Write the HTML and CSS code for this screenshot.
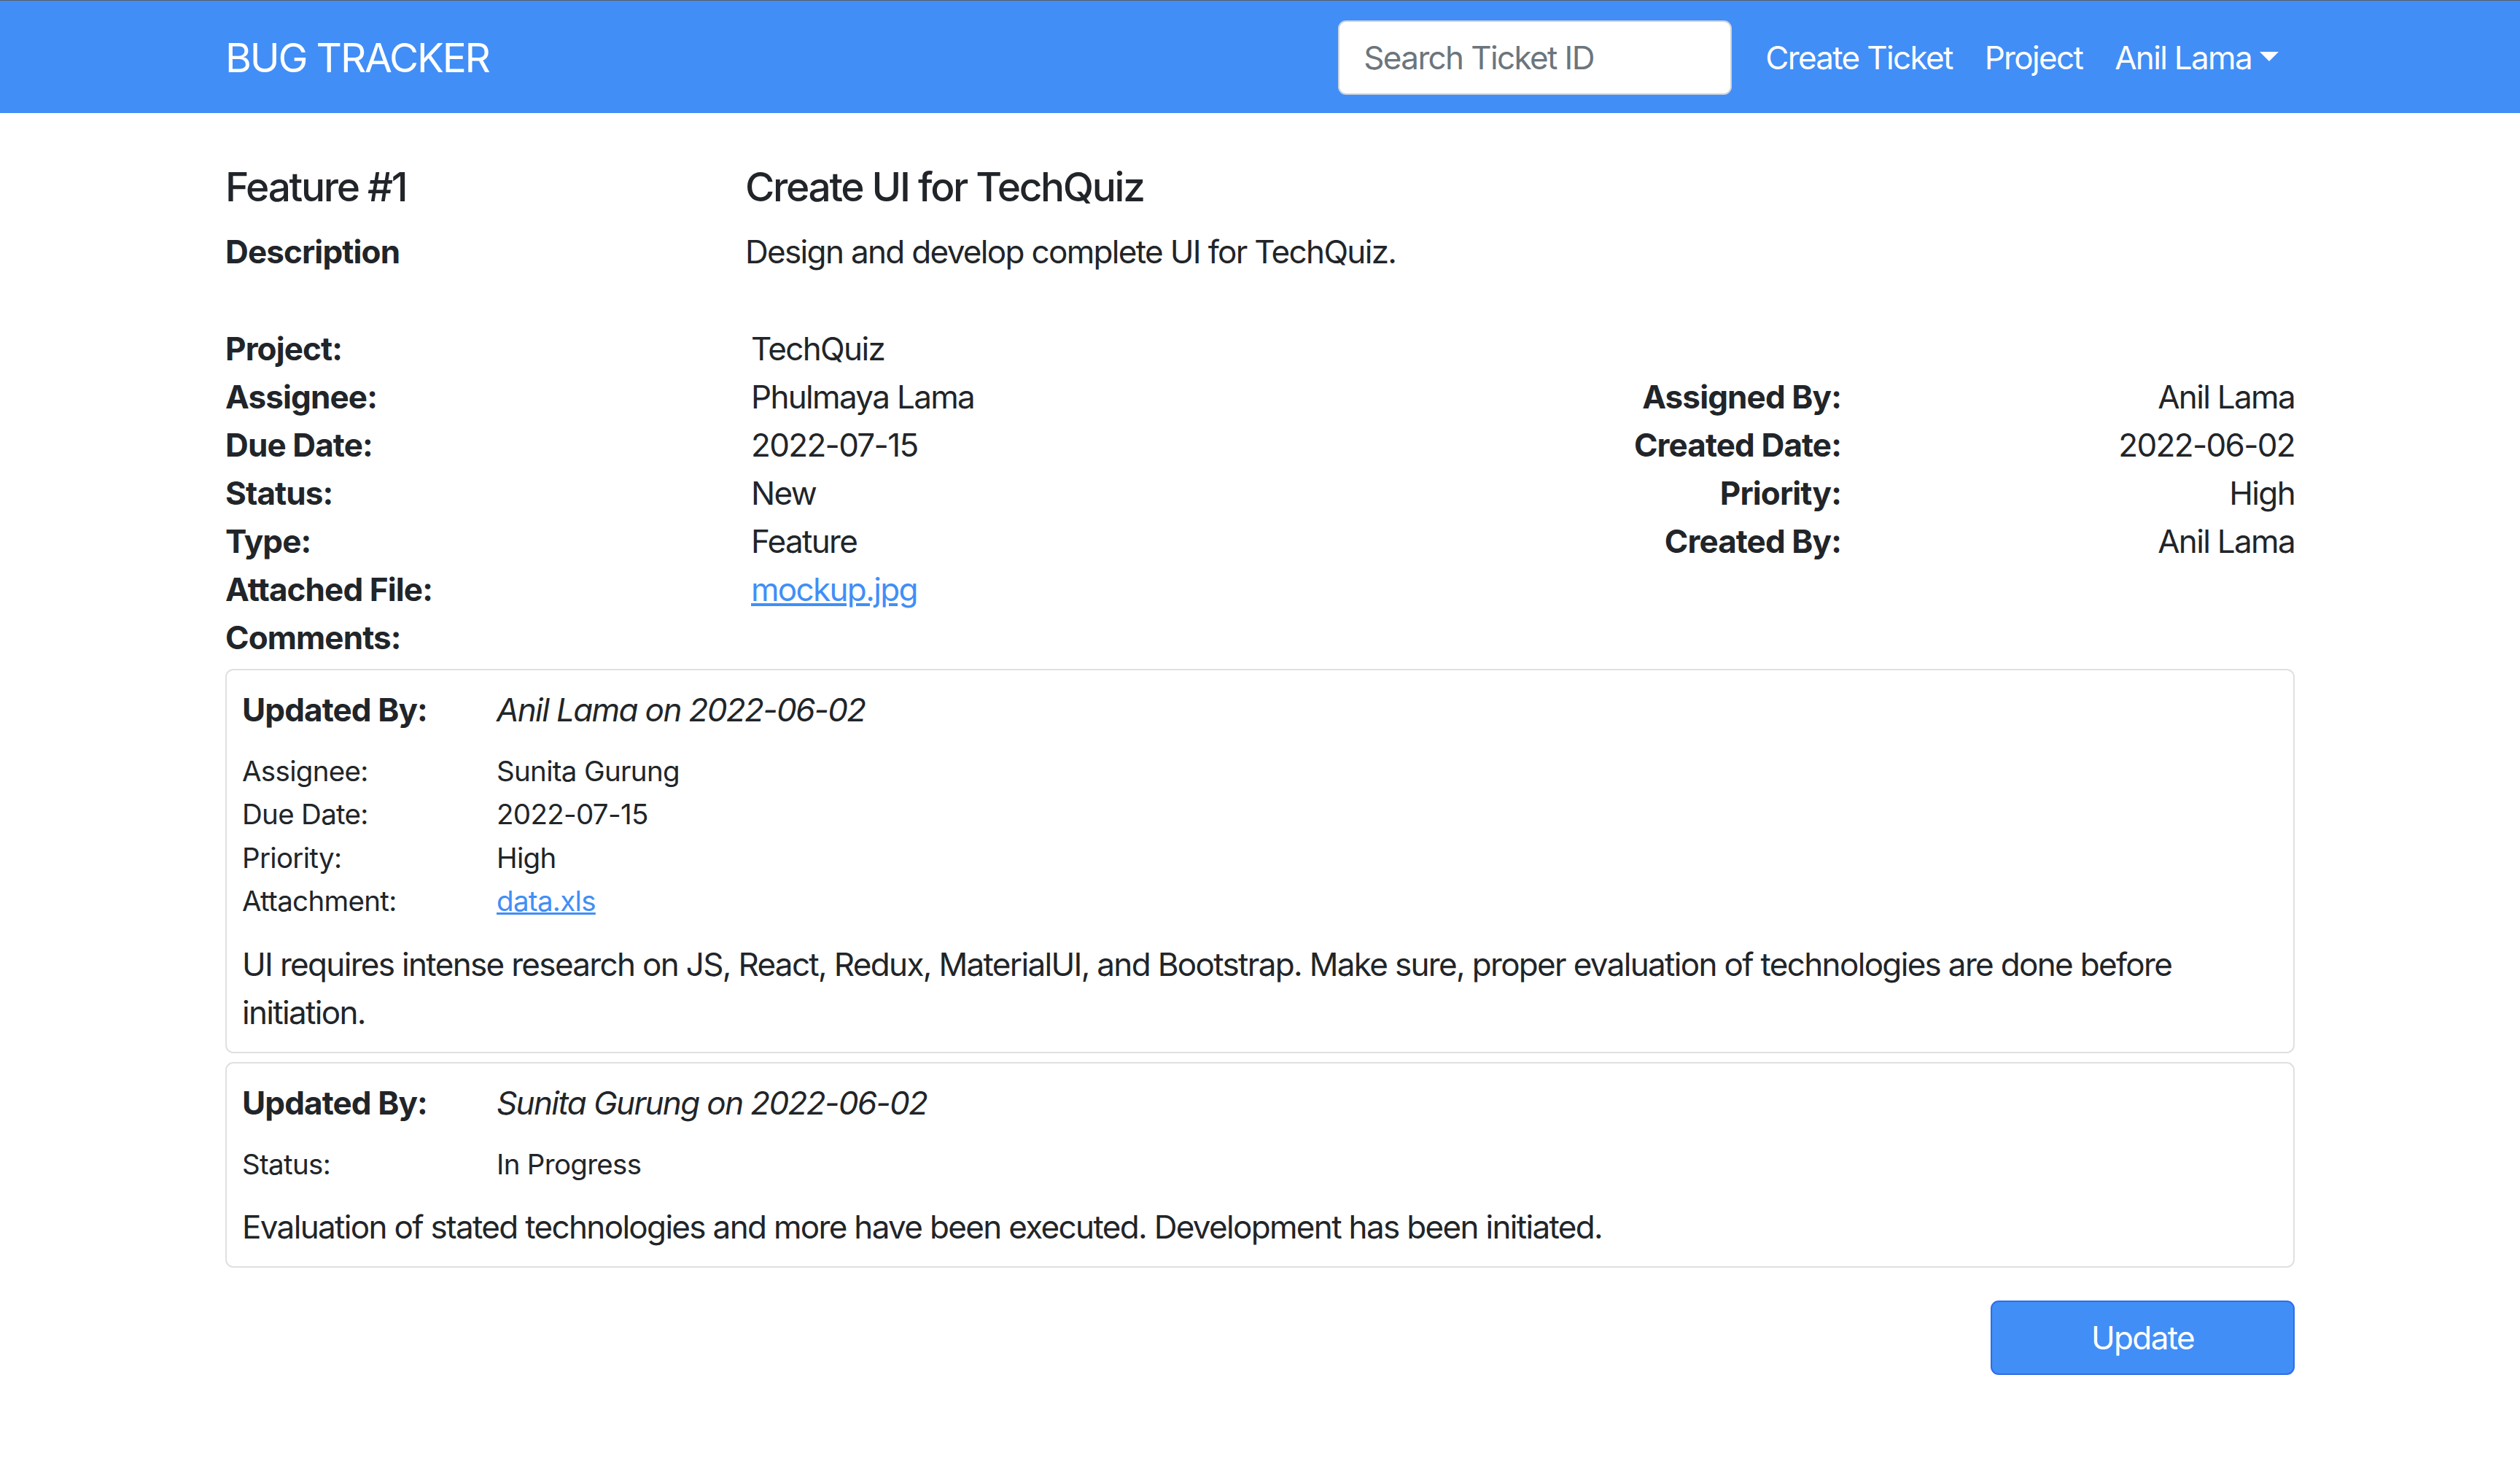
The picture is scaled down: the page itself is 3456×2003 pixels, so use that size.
FILE: index.html
```html
<!DOCTYPE html>
<html lang="en">
<head>
<meta charset="utf-8">
<title>Bug Tracker</title>
<link rel="stylesheet" href="styles.css">
</head>
<body>
<nav class="navbar">
  <div class="container nav-inner">
    <a class="brand" href="#">BUG TRACKER</a>
    <div class="nav-right">
      <input class="search" type="text" placeholder="Search Ticket ID">
      <a class="nav-link" href="#">Create Ticket</a>
      <a class="nav-link" href="#">Project</a>
      <a class="nav-link dropdown-toggle" href="#">Anil Lama</a>
    </div>
  </div>
</nav>

<main class="container page">
  <div class="title-row">
    <h5 class="title">Feature #1</h5>
    <h5 class="title">Create UI for TechQuiz</h5>
  </div>
  <div class="desc-row">
    <div class="label">Description</div>
    <div>Design and develop complete UI for TechQuiz.</div>
  </div>

  <div class="details">
    <div class="label">Project:</div><div>TechQuiz</div><div></div><div></div>
    <div class="label">Assignee:</div><div>Phulmaya Lama</div><div class="label right">Assigned By:</div><div class="right">Anil Lama</div>
    <div class="label">Due Date:</div><div>2022-07-15</div><div class="label right">Created Date:</div><div class="right">2022-06-02</div>
    <div class="label">Status:</div><div>New</div><div class="label right">Priority:</div><div class="right">High</div>
    <div class="label">Type:</div><div>Feature</div><div class="label right">Created By:</div><div class="right">Anil Lama</div>
    <div class="label">Attached File:</div><div><a class="link" href="#">mockup.jpg</a></div><div></div><div></div>
    <div class="label">Comments:</div><div></div><div></div><div></div>
  </div>

  <div class="comments">
    <div class="comment">
      <div class="comment-head">
        <div class="label">Updated By:</div>
        <div class="by">Anil Lama on 2022-06-02</div>
      </div>
      <div class="changes">
        <div>Assignee:</div><div>Sunita Gurung</div>
        <div>Due Date:</div><div>2022-07-15</div>
        <div>Priority:</div><div>High</div>
        <div>Attachment:</div><div><a class="link" href="#">data.xls</a></div>
      </div>
      <p class="comment-text">UI requires intense research on JS, React, Redux, MaterialUI, and Bootstrap. Make sure, proper evaluation of technologies are done before initiation.</p>
    </div>
    <div class="comment">
      <div class="comment-head">
        <div class="label">Updated By:</div>
        <div class="by">Sunita Gurung on 2022-06-02</div>
      </div>
      <div class="changes">
        <div>Status:</div><div>In Progress</div>
      </div>
      <p class="comment-text">Evaluation of stated technologies and more have been executed. Development has been initiated.</p>
    </div>
  </div>

  <div class="actions">
    <button class="btn" type="button">Update</button>
  </div>
</main>
</body>
</html>
```

FILE: styles.css
```css
* { box-sizing: border-box; }

html, body {
  margin: 0;
  padding: 0;
  background: #ffffff;
}

body {
  font-family: Inter, "Noto Sans", "Liberation Sans", sans-serif;
  font-size: 44px;
  line-height: 66px;
  letter-spacing: -0.038em;
  color: #212529;
}

.container {
  width: 2838px;
  margin: 0 auto;
}

/* Navbar */
.navbar {
  background: #418ef7;
  border-top: 1px solid #5a5f66;
  height: 155px;
}

.nav-inner {
  height: 100%;
  display: flex;
  align-items: center;
  justify-content: space-between;
  padding-top: 2px;
}

.brand {
  color: #ffffff;
  text-decoration: none;
  font-size: 55px;
  line-height: 66px;
  letter-spacing: -0.04em;
}

.nav-right {
  display: flex;
  align-items: center;
}

.search {
  width: 540px;
  height: 102px;
  border: 2px solid #ced4da;
  border-radius: 11px;
  padding: 0 33px;
  font-family: inherit;
  font-size: 44px;
  letter-spacing: -0.037em;
  color: #212529;
  background: #fff;
  margin-right: 24px;
  outline: none;
}

.search::placeholder {
  color: #6c757d;
}

.nav-link {
  color: #ffffff;
  text-decoration: none;
  padding: 0 22px;
  line-height: 66px;
}

.dropdown-toggle::after {
  content: "";
  display: inline-block;
  margin-left: 11px;
  vertical-align: 11px;
  border-top: 13px solid #ffffff;
  border-left: 13px solid transparent;
  border-right: 13px solid transparent;
}

/* Page */
.page {
  padding-top: 68px;
}

.title-row,
.desc-row {
  display: grid;
  grid-template-columns: 713px 1fr;
}

.title {
  margin: 0;
  font-size: 55px;
  font-weight: 500;
  line-height: 66px;
  letter-spacing: -0.042em;
}

.desc-row {
  margin-top: 23px;
}

.label {
  font-weight: 700;
  letter-spacing: -0.02em;
}

.details {
  margin-top: 67px;
  display: grid;
  grid-template-columns: 721px 1fr 700px 622px;
}

.right {
  text-align: right;
}

.link {
  color: #418ef7;
  text-decoration: underline;
}

/* Comments */
.comments {
  margin-top: 10px;
}

.comment {
  border: 2px solid #e0e0e0;
  border-radius: 11px;
  padding: 21px;
}

.comment + .comment {
  margin-top: 12px;
}

.comment-head {
  display: grid;
  grid-template-columns: 349px 1fr;
}

.by {
  font-style: italic;
  letter-spacing: -0.037em;
}

.changes {
  margin-top: 22px;
  display: grid;
  grid-template-columns: 349px 1fr;
  font-size: 38.5px;
  line-height: 59.4px;
  letter-spacing: -0.018em;
}

.comment-text {
  margin: 23px 0 0;
}

/* Actions */
.actions {
  display: flex;
  justify-content: flex-end;
  margin-top: 45px;
}

.btn {
  width: 417px;
  height: 102px;
  background: #418ef7;
  border: 2px solid #2f6de8;
  border-radius: 11px;
  color: #ffffff;
  font-family: inherit;
  font-size: 44px;
  letter-spacing: -0.038em;
  line-height: 66px;
  cursor: pointer;
}
```
